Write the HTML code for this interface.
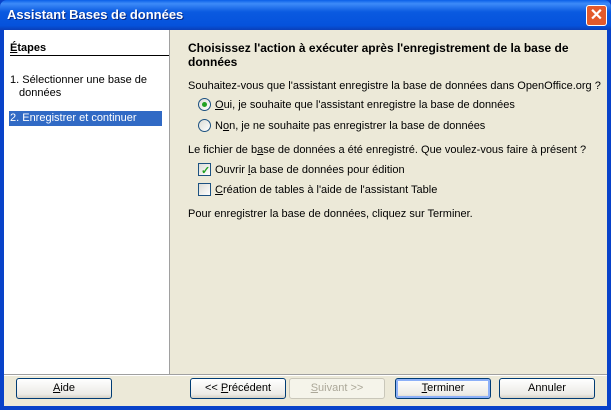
<!DOCTYPE html>
<html><head><style>
*{margin:0;padding:0;box-sizing:border-box}
body{width:611px;height:410px;overflow:hidden;font-family:"Liberation Sans",sans-serif;font-size:11px;color:#000;background:#0842c9;position:relative}
.t{position:absolute;white-space:nowrap}
#title{position:absolute;left:0;top:0;width:611px;height:30px;background:linear-gradient(#0a5fe8 0%,#3d8bf8 12%,#0a5ae0 40%,#0552dc 85%,#0a3fb8 100%);border-radius:7px 7px 0 0}
#title span{position:absolute;left:7px;top:7px;color:#fff;font-weight:bold;font-size:13px;text-shadow:1px 1px #0a2a80}
#close{position:absolute;left:586px;top:5px;width:21px;height:21px;background:#e35a2c;border:1px solid #fff;border-radius:3px;color:#fff;font-weight:bold;font-size:16px;text-align:center;line-height:19px}
#client{position:absolute;left:4px;top:30px;width:603px;height:376px;background:#ece9d8}
#left{position:absolute;left:0;top:0;width:166px;height:344px;background:#fff;border-right:1px solid #a0a0a0}
#sep{position:absolute;left:0;top:344px;width:603px;height:2px;border-top:1px solid #a0a0a0;border-bottom:1px solid #fff}
.btn{position:absolute;top:348px;height:21px;border:1px solid #003c74;border-radius:3px;background:linear-gradient(#fff,#ecebe6 80%,#d6d0c5);text-align:center;line-height:19px}
.dis{border-color:#c9c7ba;color:#aca899;background:#f5f4ea}
.def{box-shadow:inset 0 0 0 2px #8cb0f8}
.rad{position:absolute;width:13px;height:13px;border:1px solid #1c5180;border-radius:50%;background:linear-gradient(135deg,#dcdcd6,#fff)}
.chk{position:absolute;width:13px;height:13px;border:1px solid #1c5180;background:linear-gradient(135deg,#dcdcd6,#fff)}
u{text-decoration:underline}
</style></head><body>
<div id="title"><span>Assistant Bases de données</span><div id="close">✕</div></div>
<div id="client">
<div id="left">
<div class="t" style="left:6px;top:12px;font-weight:bold"><u>É</u>tapes</div>
<div style="position:absolute;left:6px;top:25px;width:159px;height:1px;background:#000"></div>
<div class="t" style="left:6px;top:44px">1. Sélectionner une base de</div>
<div class="t" style="left:15px;top:57px">données</div>
<div style="position:absolute;left:5px;top:81px;width:153px;height:15px;background:#316ac5"></div>
<div class="t" style="left:6px;top:82px;color:#fff">2. Enregistrer et continuer</div>
</div>
<div class="t" style="left:184px;top:11px;font-weight:bold;font-size:12px">Choisissez l'action à exécuter après l'enregistrement de la base de</div>
<div class="t" style="left:184px;top:25px;font-weight:bold;font-size:12px">données</div>
<div class="t" style="left:184px;top:50px">Souhaitez-vous que l'assistant enregistre la base de données dans OpenOffice.org ?</div>
<div class="rad" style="left:194px;top:68px"><div style="position:absolute;left:3px;top:3px;width:5px;height:5px;border-radius:50%;background:#21a121"></div></div>
<div class="t" style="left:211px;top:69px"><u>O</u>ui, je souhaite que l'assistant enregistre la base de données</div>
<div class="rad" style="left:194px;top:89px"></div>
<div class="t" style="left:211px;top:90px">N<u>o</u>n, je ne souhaite pas enregistrer la base de données</div>
<div class="t" style="left:184px;top:114px">Le fichier de b<u>a</u>se de données a été enregistré. Que voulez-vous faire à présent ?</div>
<div class="chk" style="left:194px;top:133px"><div style="position:absolute;left:2px;top:0px;color:#21a121;font-weight:bold;font-size:11px">✓</div></div>
<div class="t" style="left:211px;top:134px">Ouvrir <u>l</u>a base de données pour édition</div>
<div class="chk" style="left:194px;top:153px"></div>
<div class="t" style="left:211px;top:154px"><u>C</u>réation de tables à l'aide de l'assistant Table</div>
<div class="t" style="left:184px;top:178px">Pour enregistrer la base de données, cliquez sur Terminer.</div>
<div id="sep"></div>
<div class="btn" style="left:12px;width:96px"><u>A</u>ide</div>
<div class="btn" style="left:186px;width:96px">&lt;&lt; <u>P</u>récédent</div>
<div class="btn dis" style="left:285px;width:96px"><u>S</u>uivant &gt;&gt;</div>
<div class="btn def" style="left:391px;width:96px"><u>T</u>erminer</div>
<div class="btn" style="left:495px;width:96px">Annuler</div>
</div>
</body></html>
